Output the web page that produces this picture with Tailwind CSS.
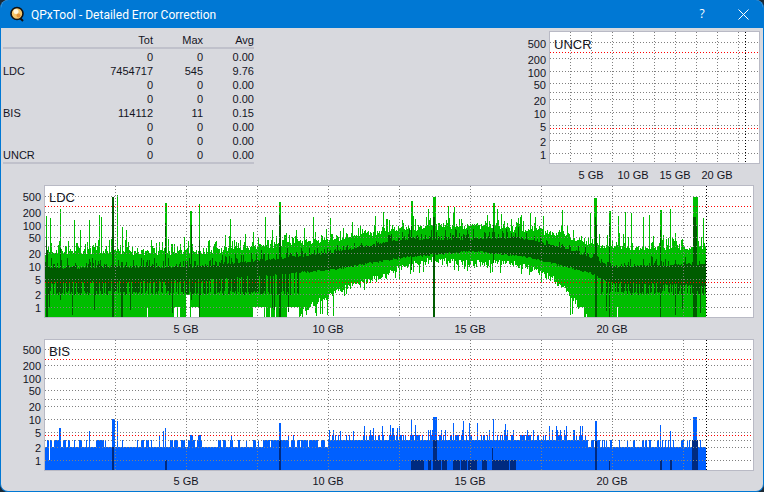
<!DOCTYPE html>
<html lang="en">
<head>
    <meta charset="UTF-8">
    <title>QPxTool - Detailed Error Correction</title>
    <script src="https://cdn.jsdelivr.net/npm/@tailwindcss/browser@4"></script>
</head>
<body class="w-[764px] h-[492px] overflow-hidden bg-[#1c2a36] font-['Liberation_Sans',sans-serif] text-[11px] leading-[14px] text-[#14141e]">
<div class="w-[764px] h-[492px] flex flex-col overflow-hidden rounded-[8px] border-x border-b border-[#0078d4] bg-[#d8d9de]">

    <!-- Title bar -->
    <div class="h-[28px] -mx-px shrink-0 flex items-center bg-[#0078d4] text-white">
        <svg class="ml-[9px] w-[16px] h-[16px]" viewBox="0 0 16 16">
            <path d="M11 12l3 3" stroke="#111" stroke-width="2"/>
            <circle cx="8" cy="7.5" r="6" fill="#f4c56a" stroke="#111" stroke-width="1.6"/>
            <circle cx="7" cy="5.5" r="2.5" fill="#fff6dc"/>
            <circle cx="9.5" cy="9.5" r="2" fill="#e0913a"/>
        </svg>
        <span class="ml-[6px] pt-[1px] font-['Roboto',sans-serif] text-[12px] leading-[16px]">QPxTool - Detailed Error Correction</span>
        <span class="ml-auto w-[14px] text-center font-['Open_Sans',sans-serif] text-[12px]">?</span>
        <svg class="ml-[29px] mr-[15px] w-[11px] h-[11px]" viewBox="0 0 11 11">
            <path d="M0.5 0.5L10.5 10.5M10.5 0.5L0.5 10.5" stroke="#fff" stroke-width="1" fill="none"/>
        </svg>
    </div>

    <!-- Stats table and UNCR chart -->
    <div class="flex shrink-0">
        <div class="w-[520px] pl-[2px] pt-[4px]">
            <table class="w-[251px]">
                <thead>
                    <tr class="h-[16px] border-b-2 border-[#c0c1cb]">
                        <th class="font-normal text-left"></th>
                        <th class="font-normal text-right">Tot</th>
                        <th class="w-[50px] font-normal text-right">Max</th>
                        <th class="w-[51px] font-normal text-right">Avg</th>
                    </tr>
                </thead>
                <tbody class="border-b-2 border-[#c0c1cb]">
                    <tr class="h-[16px] align-bottom"><td></td><td class="text-right">0</td><td class="text-right">0</td><td class="text-right">0.00</td></tr>
                    <tr class="h-[14px]"><td>LDC</td><td class="text-right">7454717</td><td class="text-right">545</td><td class="text-right">9.76</td></tr>
                    <tr class="h-[14px]"><td></td><td class="text-right">0</td><td class="text-right">0</td><td class="text-right">0.00</td></tr>
                    <tr class="h-[14px]"><td></td><td class="text-right">0</td><td class="text-right">0</td><td class="text-right">0.00</td></tr>
                    <tr class="h-[14px]"><td>BIS</td><td class="text-right">114112</td><td class="text-right">11</td><td class="text-right">0.15</td></tr>
                    <tr class="h-[14px]"><td></td><td class="text-right">0</td><td class="text-right">0</td><td class="text-right">0.00</td></tr>
                    <tr class="h-[14px]"><td></td><td class="text-right">0</td><td class="text-right">0</td><td class="text-right">0.00</td></tr>
                    <tr class="h-[14px]"><td>UNCR</td><td class="text-right">0</td><td class="text-right">0</td><td class="text-right">0.00</td></tr>
                </tbody>
            </table>
        </div>
        <div class="pt-[3px]">
            <div class="flex">
                <div class="w-[28px] pr-[3px] pt-[6px] flex flex-col items-end">
                    <div class="h-[16px]">500</div><div class="h-[13px]">200</div><div class="h-[12px]">100</div><div class="h-[16px]">50</div><div class="h-[13px]">20</div><div class="h-[13px]">10</div><div class="h-[15px]">5</div><div class="h-[13px]">2</div><div class="h-[13px]">1</div>
                </div>
                <div class="relative w-[211px] h-[133px] border border-[#b9bac5] bg-white">
                    <svg id="uncr" width="209" height="131" class="block"></svg>
                    <span class="absolute left-[4px] top-[5px] text-[13px] leading-[16px]">UNCR</span>
                </div>
            </div>
            <div class="h-[21px] ml-[49px] grid grid-cols-[repeat(4,42px)] items-center text-center">
                <span>5 GB</span><span>10 GB</span><span>15 GB</span><span>20 GB</span>
            </div>
        </div>
    </div>

    <!-- LDC chart -->
    <div class="flex shrink-0">
        <div class="w-[43px] pr-[3px] pt-[5px] flex flex-col items-end">
            <div class="h-[16px]">500</div><div class="h-[13px]">200</div><div class="h-[12px]">100</div><div class="h-[16px]">50</div><div class="h-[13px]">20</div><div class="h-[13px]">10</div><div class="h-[15px]">5</div><div class="h-[13px]">2</div><div class="h-[13px]">1</div>
        </div>
        <div class="relative w-[710px] h-[133px] border border-[#b9bac5] bg-white">
            <svg id="ldc" width="708" height="131" class="block"></svg>
            <span class="absolute left-[4px] top-[4px] text-[13px] leading-[16px]">LDC</span>
        </div>
    </div>
    <div class="h-[21px] ml-[114px] shrink-0 grid grid-cols-[repeat(4,142px)] items-center text-center">
        <span>5 GB</span><span>10 GB</span><span>15 GB</span><span>20 GB</span>
    </div>

    <!-- BIS chart -->
    <div class="flex shrink-0">
        <div class="w-[43px] pr-[3px] pt-[4px] flex flex-col items-end">
            <div class="h-[16px]">500</div><div class="h-[13px]">200</div><div class="h-[12px]">100</div><div class="h-[16px]">50</div><div class="h-[13px]">20</div><div class="h-[13px]">10</div><div class="h-[15px]">5</div><div class="h-[13px]">2</div><div class="h-[13px]">1</div>
        </div>
        <div class="relative w-[710px] h-[132px] border border-[#b9bac5] bg-white">
            <svg id="bis" width="708" height="130" class="block"></svg>
            <span class="absolute left-[4px] top-[4px] text-[13px] leading-[16px]">BIS</span>
        </div>
    </div>
    <div class="h-[20px] ml-[114px] shrink-0 grid grid-cols-[repeat(4,142px)] items-center text-center">
        <span>5 GB</span><span>10 GB</span><span>15 GB</span><span>20 GB</span>
    </div>
</div>

<script>
    // small seeded random so the noise is the same on every load
    let seed = 20240;
    function rnd() {
        seed = (seed + 0x6D2B79F5) | 0;
        let t = Math.imul(seed ^ (seed >>> 15), 1 | seed);
        t = (t + Math.imul(t ^ (t >>> 7), 61 | t)) ^ t;
        return ((t ^ (t >>> 14)) >>> 0) / 4294967296;
    }

    function lerp(keys, x) {
        for (let i = 1; i < keys.length; i++) {
            if (x <= keys[i][0]) {
                const a = keys[i - 1], b = keys[i];
                return a[1] + (b[1] - a[1]) * (x - a[0]) / (b[0] - a[0]);
            }
        }
        return keys[keys.length - 1][1];
    }

    function addPath(svg, d, color) {
        const p = document.createElementNS("http://www.w3.org/2000/svg", "path");
        p.setAttribute("d", d);
        p.setAttribute("stroke", color);
        p.setAttribute("fill", "none");
        p.setAttribute("shape-rendering", "crispEdges");
        svg.appendChild(p);
    }

    // dots are written out one by one, one pixel each
    function dotsH(y, w, period) {
        let d = "";
        for (let x = 0; x < w; x += period) d += `M${x} ${y + 0.5}h1`;
        return d;
    }

    function dotsV(x, h, period) {
        let d = "";
        for (let y = 0; y < h; y += period) d += `M${x + 0.5} ${y}v1`;
        return d;
    }

    // grid offsets are measured from the top border of each chart
    function drawGrid(svg, left, top, first, step, end, w, h) {
        const rows = [11, 27, 40, 52, 61, 68, 81, 94, 102, 109, 122];
        let d = "";
        rows.forEach(r => { d += dotsH(r - 1 + top, w, 3); });
        for (let i = 0; i < 9; i++) {
            d += dotsV(first + i * step - left, h, 3);
        }
        addPath(svg, d, "#808080");
        addPath(svg, dotsH(20 + top, w, 3) + dotsH(96 + top, w, 3), "#ff0000");
        addPath(svg, dotsV(end - left, h, 3), "#000000");
    }

    function column(x, y1, y2, left, top) {
        return `M${x - left + 0.5} ${y1 - top}V${y2 - top}`;
    }

    function drawLdc() {
        const svg = document.getElementById("ldc");
        const left = 45, top = 186, bottom = 317;
        const lightTop = [[45, 250], [200, 250], [330, 238], [400, 227], [470, 224], [540, 229], [560, 234], [590, 241], [610, 246], [706, 246]];
        const lightBot = [[45, 317], [298, 317], [305, 305], [330, 292], [345, 284], [380, 274], [400, 264], [430, 257], [470, 260], [510, 259], [540, 269], [555, 277], [572, 293], [580, 305], [586, 317], [706, 317]];
        const darkTop = [[45, 267], [200, 266], [330, 252], [400, 239], [520, 237], [550, 244], [560, 247], [590, 256], [610, 266], [706, 263]];
        const darkBot = [[45, 282], [200, 280], [330, 269], [400, 257], [470, 250], [520, 255], [550, 262], [590, 272], [610, 282], [706, 284]];
        const spikes = [[46,216],[50,218],[60,209],[74,220],[80,230],[89,220],[99,215],[101,217],[112,197],[113,197],[117,195],[122,227],[126,230],[165,203],[166,203],[190,211],[191,211],[199,204],[230,219],[253,232],[265,217],[272,230],[279,202],[280,202],[289,235],[304,228],[313,217],[330,218],[340,231],[358,228],[375,216],[383,212],[411,201],[412,201],[428,209],[433,197],[434,197],[435,197],[448,206],[454,207],[487,215],[493,203],[494,203],[497,209],[521,215],[530,213],[543,216],[562,210],[590,213],[594,198],[595,198],[596,198],[609,211],[610,211],[618,216],[625,212],[631,213],[643,217],[649,215],[660,210],[661,210],[670,209],[693,197],[694,197],[695,197],[696,197],[697,197],[703,218]];
        const darkSpikes = [[46,240,317],[47,250,317],[60,248,300],[112,197,317],[113,197,317],[121,262,317],[122,262,317],[165,223,285],[191,225,300],[199,240,317],[279,215,317],[280,220,317],[411,225,270],[433,217,317],[434,217,317],[493,225,263],[595,217,317],[596,225,317],[609,223,317],[660,230,317],[693,217,317],[694,217,317],[695,217,317],[696,225,317]];
        const gaps = [[147,147,307],[174,176,307],[178,179,307],[186,189,295],[191,198,307],[253,263,307],[265,265,307],[270,270,307],[275,275,307],[287,298,307],[579,583,307],[617,617,307]];

        const topAt = {}, darkAt = {};
        spikes.forEach(s => { topAt[s[0]] = s[1]; });
        darkSpikes.forEach(s => { darkAt[s[0]] = s; });

        let light = "", dark = "";
        for (let x = 45; x <= 705; x++) {
            let t = lerp(lightTop, x) + rnd() * 5 - Math.pow(rnd(), 3) * 14;
            if (topAt[x]) t = topAt[x];
            let b = lerp(lightBot, x);
            if (b < 317) b += rnd() * 7 + (rnd() > 0.9 ? 8 : 0);
            // long thin streaks where the band starts and ends
            if ((x > 300 && x < 336) || (x > 560 && x < 590)) {
                if (rnd() < 0.22) b = bottom - rnd() * 5;
            }
            b = Math.min(Math.round(b), bottom);
            gaps.forEach(g => { if (x >= g[0] && x <= g[1]) b = g[2]; });
            light += column(x, Math.round(t), b, left, top);

            let dt = lerp(darkTop, x) + rnd() * 2 - Math.pow(rnd(), 4) * 10;
            let db = lerp(darkBot, x) + rnd() * 2;
            // streaks under the dark band at both ends of the disc
            if (x < 300 || x > 600) {
                const v = rnd();
                if (v < 0.6) db = 295 - rnd() * 4;
                if (v > 0.95) db = bottom - rnd() * 10;
            }
            if (darkAt[x]) { dt = darkAt[x][1]; db = darkAt[x][2]; }
            dark += column(x, Math.round(dt), Math.round(db), left, top);
        }
        addPath(svg, light, "#00be00");
        addPath(svg, dark, "#005c00");
        drawGrid(svg, left, 0, 115, 71, 706, 708, 131);
    }

    function drawBis() {
        const svg = document.getElementById("bis");
        const left = 45, top = 340, bottom = 470;
        // bars that stand one step above the base, left part of the disc
        const steps = [[47,48],[50,51],[54,58],[63,65],[68,69],[74,74],[79,81],[86,86],[96,103],[105,105],[122,122],[137,137],[141,143],[146,148],[151,151],[159,159],[163,163],[170,172],[174,177],[181,184],[188,194],[197,201],[218,220],[223,223],[224,225],[230,232],[238,239],[246,246],[253,255],[258,258],[263,269],[271,283],[284,287],[291,294],[297,299],[301,302],[303,307],[309,316],[317,317],[321,324]];
        const spikes = [[59,428],[60,428],[89,431],[112,419],[113,419],[114,419],[117,421],[159,435],[163,431],[165,428],[190,435],[191,435],[192,435],[198,435],[199,435],[200,435],[231,435],[279,423],[280,423],[288,435],[293,435],[340,431],[353,431],[373,428],[390,425],[392,428],[393,428],[397,428],[411,419],[415,425],[433,417],[434,417],[435,417],[436,417],[453,423],[463,421],[469,423],[477,423],[493,419],[505,424],[595,421],[596,421],[660,425],[670,431],[693,417],[694,417],[695,417],[696,417]];
        const navy = [[112,113,447],[165,166,460],[279,280,440],[411,423,460],[428,430,460],[433,436,440],[437,440,460],[442,446,460],[453,459,460],[461,466,460],[468,476,460],[482,486,460],[492,492,447],[493,508,460],[510,515,460],[595,596,441],[609,609,460],[660,661,460],[670,671,460],[692,697,440]];

        const stepAt = {}, spikeAt = {};
        steps.forEach(s => { for (let x = s[0]; x <= s[1]; x++) stepAt[x] = true; });
        spikes.forEach(s => { spikeAt[s[0]] = s[1]; });

        let blue = "", dark = "";
        for (let x = 45; x <= 705; x++) {
            let t = 447;
            if (x < 328) {
                if (stepAt[x]) t = 440;
            } else if (x < 587) {
                t = 440;
                const v = rnd();
                if (v < 0.42) t = 435;
                if (v < 0.1) t = 430;
                if (v < 0.03) t = 426;
            } else if (x < 612) {
                t = rnd() < 0.6 ? 440 : 447;
            } else if (rnd() < 0.28) {
                t = 440;
            }
            if (spikeAt[x]) t = spikeAt[x];
            blue += column(x, t, bottom, left, top);
        }
        navy.forEach(n => {
            for (let x = n[0]; x <= n[1]; x++) dark += column(x, n[2], bottom, left, top);
        });
        addPath(svg, blue, "#0060ff");
        addPath(svg, column(49, 447, 460, left, top), "#ffffff");
        addPath(svg, dark, "#002a80");
        drawGrid(svg, left, -1, 115, 71, 706, 708, 130);
    }

    drawLdc();
    drawBis();
    drawGrid(document.getElementById("uncr"), 550, 0, 570, 21, 745, 209, 131);
</script>
</body>
</html>
